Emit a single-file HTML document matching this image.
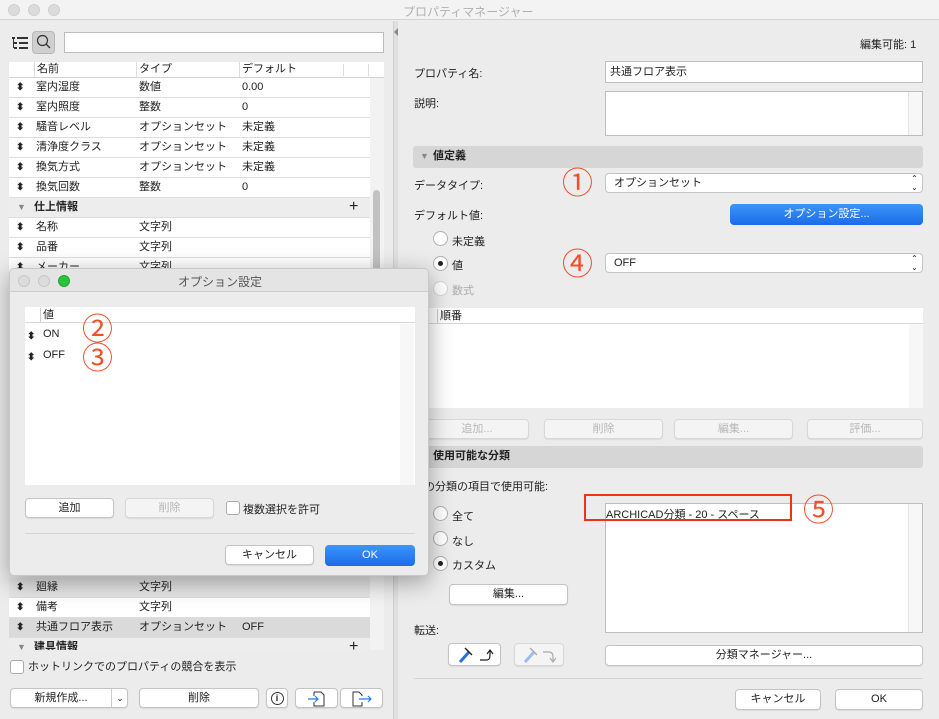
<!DOCTYPE html>
<html><head><meta charset="utf-8"><style>
*{box-sizing:border-box;margin:0;padding:0}
body{width:939px;height:719px;overflow:hidden;background:#ececec;font-family:"Liberation Sans","Noto Sans CJK JP",sans-serif;font-size:11px;color:#222;position:relative}
.a{position:absolute}
.btn{position:absolute;background:#fff;border:1px solid #c4c4c4;border-radius:4px;text-align:center;line-height:18px;font-size:11px;box-shadow:0 1px 1px rgba(0,0,0,.08)}
.dis{color:#b8b8b8;background:#f4f4f4;border-color:#d8d8d8}
.field{position:absolute;background:#fff;border:1px solid #bdbdbd}
.row{position:absolute;left:9px;width:361px;height:20px;background:#fff;border-bottom:1px solid #ddd;line-height:19px}
.row span{position:absolute}
.sort{position:absolute;left:7px;font-size:10px;line-height:10px;top:5px}
.radio{position:absolute;width:15px;height:15px;border-radius:50%;background:#fff;border:1px solid #b0b0b0}
.radio.on::after{content:"";position:absolute;left:4px;top:4px;width:5px;height:5px;border-radius:50%;background:#222}
.num{position:absolute;color:#f0502a;font-size:31px;line-height:31px;font-family:"Noto Sans CJK JP",sans-serif}
.sec{position:absolute;background:#d6d6d6;border-radius:3px;font-weight:bold;line-height:21px;padding-left:20px}
.sel{position:absolute;background:#fff;border:1px solid #c4c4c4;border-radius:4px;padding-left:8px;line-height:18px}
.sel::after{content:"⌃⌄";position:absolute;right:4px;top:0;font-size:8px;writing-mode:vertical-lr;line-height:8px}
</style></head><body>
<div class="a" style="left:0;top:0;width:939px;height:20px;background:#f3f3f3;border-bottom:1px solid #d4d4d4"></div>
<div class="a" style="left:8px;top:4px;width:12px;height:12px;border-radius:50%;background:#dcdcdc;border:1px solid #cfcfcf"></div>
<div class="a" style="left:28px;top:4px;width:12px;height:12px;border-radius:50%;background:#dcdcdc;border:1px solid #cfcfcf"></div>
<div class="a" style="left:48px;top:4px;width:12px;height:12px;border-radius:50%;background:#dcdcdc;border:1px solid #cfcfcf"></div>
<div class="a" style="left:403px;top:3px;font-size:12px;color:#b0b0b0">プロパティマネージャー</div>

<div class="a" style="left:393px;top:21px;width:5px;height:698px;background:#e0e0e0;border-left:1px solid #d0d0d0"></div>
<div class="a" style="left:394px;top:28px;width:0;height:0;border-top:4px solid transparent;border-bottom:4px solid transparent;border-right:4px solid #888"></div>

<svg class="a" style="left:12px;top:37px" width="17" height="12"><g fill="#333"><rect x="0" y="0" width="3" height="2"/><rect x="5" y="0" width="11" height="2"/><rect x="2" y="5" width="3" height="2"/><rect x="7" y="5" width="9" height="2"/><rect x="2" y="10" width="3" height="2"/><rect x="7" y="10" width="9" height="2"/><rect x="1" y="2" width="1" height="9"/></g></svg>
<div class="a" style="left:32px;top:31px;width:23px;height:23px;background:#cfcfcf;border:1px solid #b8b8b8;border-radius:4px"></div>
<svg class="a" style="left:36px;top:34px" width="16" height="16"><circle cx="6.5" cy="6.5" r="5" fill="none" stroke="#333" stroke-width="1.2"/><line x1="10" y1="10" x2="14" y2="14" stroke="#333" stroke-width="1.3"/></svg>
<div class="field" style="left:64px;top:32px;width:320px;height:21px"></div>

<div class="a" style="left:9px;top:62px;width:375px;height:16px;background:#fff;border-bottom:1px solid #d4d4d4"></div>
<div class="a" style="left:34px;top:62px;line-height:15px;border-left:1px solid #ddd;padding-left:2px">名前</div>
<div class="a" style="left:136px;top:62px;line-height:15px;border-left:1px solid #ddd;padding-left:2px">タイプ</div>
<div class="a" style="left:239px;top:62px;line-height:15px;border-left:1px solid #ddd;padding-left:2px">デフォルト</div>
<div class="a" style="left:343px;top:64px;height:12px;border-left:1px solid #ddd"></div>
<div class="a" style="left:368px;top:64px;height:12px;border-left:1px solid #ddd"></div>
<div class="a" style="left:370px;top:78px;width:14px;height:572px;background:#f2f2f2"></div>
<div class="a" style="left:373px;top:190px;width:7px;height:90px;background:#c2c2c2;border-radius:4px"></div>

<div class="row" style="top:78px"><b class="sort">⬍</b><span style="left:27px">室内湿度</span><span style="left:130px">数値</span><span style="left:233px">0.00</span></div>
<div class="row" style="top:98px"><b class="sort">⬍</b><span style="left:27px">室内照度</span><span style="left:130px">整数</span><span style="left:233px">0</span></div>
<div class="row" style="top:118px"><b class="sort">⬍</b><span style="left:27px">騒音レベル</span><span style="left:130px">オプションセット</span><span style="left:233px">未定義</span></div>
<div class="row" style="top:138px"><b class="sort">⬍</b><span style="left:27px">清浄度クラス</span><span style="left:130px">オプションセット</span><span style="left:233px">未定義</span></div>
<div class="row" style="top:158px"><b class="sort">⬍</b><span style="left:27px">換気方式</span><span style="left:130px">オプションセット</span><span style="left:233px">未定義</span></div>
<div class="row" style="top:178px"><b class="sort">⬍</b><span style="left:27px">換気回数</span><span style="left:130px">整数</span><span style="left:233px">0</span></div>
<div class="row" style="top:198px;background:#ededed"><span style="left:8px;color:#888;font-size:9px">▼</span><span style="left:25px;font-weight:bold">仕上情報</span><span style="left:340px;font-size:16px;line-height:18px">+</span></div>
<div class="row" style="top:218px"><b class="sort">⬍</b><span style="left:27px">名称</span><span style="left:130px">文字列</span></div>
<div class="row" style="top:238px"><b class="sort">⬍</b><span style="left:27px">品番</span><span style="left:130px">文字列</span></div>
<div class="row" style="top:258px"><b class="sort">⬍</b><span style="left:27px">メーカー</span><span style="left:130px">文字列</span></div>
<div class="row" style="top:578px;background:#e6e6e6"><b class="sort">⬍</b><span style="left:27px">廻縁</span><span style="left:130px">文字列</span></div>
<div class="row" style="top:598px"><b class="sort">⬍</b><span style="left:27px">備考</span><span style="left:130px">文字列</span></div>
<div class="row" style="top:618px;background:#dadada"><b class="sort">⬍</b><span style="left:27px">共通フロア表示</span><span style="left:130px">オプションセット</span><span style="left:233px">OFF</span></div>
<div class="row" style="top:638px;height:12px;overflow:hidden;background:#ededed;border:0"><span style="left:8px;color:#888;font-size:9px">▼</span><span style="left:25px;font-weight:bold">建具情報</span><span style="left:340px;font-size:16px;line-height:18px">+</span></div>

<div class="a" style="left:10px;top:660px;width:14px;height:14px;background:#fff;border:1px solid #aaa;border-radius:3px"></div>
<div class="a" style="left:28px;top:660px;line-height:14px">ホットリンクでのプロパティの競合を表示</div>
<div class="btn" style="left:10px;top:688px;width:118px;height:20px"><span style="position:absolute;left:0;width:100px">新規作成...</span><span style="position:absolute;left:100px;top:0;width:17px;border-left:1px solid #ccc;font-size:9px">⌄</span></div>
<div class="btn" style="left:139px;top:688px;width:120px;height:20px">削除</div>
<div class="btn" style="left:266px;top:688px;width:22px;height:20px"><span style="display:inline-block;width:13px;height:13px;border:1px solid #333;border-radius:50%;line-height:11px;font-size:9px;font-weight:bold;margin-top:3px">i</span></div>
<div class="btn" style="left:295px;top:688px;width:43px;height:20px"><svg width="20" height="18" style="margin-top:1px"><path d="M7 2 H14 L17 5 V16 H7 V12 M7 6 V2" fill="none" stroke="#333"/><path d="M1 9 H11 M8 6 L11 9 L8 12" fill="none" stroke="#2a7ae4" stroke-width="1.2"/></svg></div>
<div class="btn" style="left:340px;top:688px;width:43px;height:20px"><svg width="22" height="18" style="margin-top:1px"><path d="M11 6 V5 L8 2 H2 V16 H11 V12" fill="none" stroke="#333"/><path d="M8 9 H20 M17 6 L20 9 L17 12" fill="none" stroke="#2a7ae4" stroke-width="1.2"/></svg></div>

<div class="a" style="left:860px;top:36px;">編集可能: 1</div>
<div class="a" style="left:414px;top:65px">プロパティ名:</div>
<div class="field" style="left:605px;top:61px;width:318px;height:22px;padding-left:4px;line-height:20px">共通フロア表示</div>
<div class="a" style="left:414px;top:95px">説明:</div>
<div class="field" style="left:605px;top:91px;width:318px;height:45px"><div style="position:absolute;right:0;top:0;width:14px;height:43px;background:#f7f7f7;border-left:1px solid #e4e4e4"></div></div>
<div class="sec" style="left:413px;top:146px;width:510px;height:22px"><span style="position:absolute;left:7px;color:#888;font-size:9px;font-weight:normal">▼</span>値定義</div>
<div class="a" style="left:414px;top:177px">データタイプ:</div>
<div class="num" style="left:562px;top:165px">①</div>
<div class="sel" style="left:605px;top:173px;width:318px;height:20px">オプションセット</div>
<div class="a" style="left:414px;top:207px">デフォルト値:</div>
<div class="a" style="left:730px;top:204px;width:193px;height:21px;border-radius:4px;background:linear-gradient(#3d95f8,#1a6ce8);color:#fff;text-align:center;line-height:21px">オプション設定...</div>
<div class="radio" style="left:433px;top:231px"></div><div class="a" style="left:452px;top:233px">未定義</div>
<div class="radio on" style="left:433px;top:256px"></div><div class="a" style="left:452px;top:257px">値</div>
<div class="radio" style="left:433px;top:281px;border-color:#d4d4d4"></div><div class="a" style="left:452px;top:282px;color:#aaa">数式</div>
<div class="num" style="left:562px;top:246px">④</div>
<div class="sel" style="left:605px;top:253px;width:318px;height:20px">OFF</div>

<div class="a" style="left:420px;top:308px;width:503px;height:100px;background:#fff"></div>
<div class="a" style="left:420px;top:308px;width:503px;height:16px;border-bottom:1px solid #d8d8d8"></div>
<div class="a" style="left:437px;top:309px;border-left:1px solid #ccc;padding-left:2px;line-height:14px">順番</div>
<div class="a" style="left:909px;top:324px;width:14px;height:84px;background:#f7f7f7"></div>
<div class="btn dis" style="left:425px;top:419px;width:104px;height:20px">追加...</div>
<div class="btn dis" style="left:544px;top:419px;width:119px;height:20px">削除</div>
<div class="btn dis" style="left:674px;top:419px;width:119px;height:20px">編集...</div>
<div class="btn dis" style="left:807px;top:419px;width:116px;height:20px">評価...</div>
<div class="sec" style="left:420px;top:446px;width:503px;height:22px;padding-left:13px">使用可能な分類</div>
<div class="a" style="left:424px;top:478px">の分類の項目で使用可能:</div>
<div class="radio" style="left:433px;top:506px"></div><div class="a" style="left:452px;top:508px">全て</div>
<div class="radio" style="left:433px;top:531px"></div><div class="a" style="left:452px;top:533px">なし</div>
<div class="radio on" style="left:433px;top:556px"></div><div class="a" style="left:452px;top:557px">カスタム</div>
<div class="btn" style="left:449px;top:584px;width:119px;height:21px">編集...</div>
<div class="a" style="left:414px;top:622px">転送:</div>
<div class="btn" style="left:448px;top:643px;width:53px;height:23px"><svg width="50" height="20" style="margin-top:1px"><line x1="10" y1="17" x2="19" y2="7" stroke="#2a6fe0" stroke-width="3"/><line x1="15" y1="3" x2="22" y2="10" stroke="#222" stroke-width="1.4"/><path d="M30 15 H37 Q40 15 40 10 V6 M37 9 L40 5 L43 9" stroke="#222" fill="none" stroke-width="1.2"/></svg></div>
<div class="btn dis" style="left:514px;top:643px;width:50px;height:23px"><svg width="48" height="20" style="margin-top:1px"><line x1="10" y1="17" x2="19" y2="7" stroke="#9dbcf0" stroke-width="3"/><line x1="15" y1="3" x2="22" y2="10" stroke="#aaa" stroke-width="1.4"/><path d="M28 7 H34 Q38 7 38 12 V16 M35 13 L38 17 L41 13" stroke="#aaa" fill="none" stroke-width="1.2"/></svg></div>
<div class="field" style="left:605px;top:503px;width:318px;height:130px"><div style="position:absolute;right:0;top:0;width:14px;height:128px;background:#f7f7f7;border-left:1px solid #e4e4e4"></div><div style="position:absolute;left:0;top:2px">ARCHICAD分類 - 20 - スペース</div></div>
<div class="a" style="left:584px;top:494px;width:208px;height:27px;border:2px solid #f0321c"></div>
<div class="num" style="left:803px;top:492px">⑤</div>
<div class="btn" style="left:605px;top:645px;width:318px;height:21px">分類マネージャー...</div>
<div class="a" style="left:414px;top:678px;width:509px;border-top:1px solid #d4d4d4"></div>
<div class="btn" style="left:735px;top:689px;width:86px;height:21px">キャンセル</div>
<div class="btn" style="left:835px;top:689px;width:88px;height:21px">OK</div>

<div class="a" style="left:9px;top:268px;width:420px;height:308px;background:#ececec;border:1px solid #c8c8c8;border-radius:5px;box-shadow:0 6px 24px rgba(0,0,0,.35);overflow:hidden">
 <div class="a" style="left:0;top:0;width:420px;height:23px;background:#e4e4e4;border-bottom:1px solid #cdcdcd"></div>
 <div class="a" style="left:8px;top:6px;width:12px;height:12px;border-radius:50%;background:#dcdcdc;border:1px solid #c8c8c8"></div>
 <div class="a" style="left:28px;top:6px;width:12px;height:12px;border-radius:50%;background:#dcdcdc;border:1px solid #c8c8c8"></div>
 <div class="a" style="left:48px;top:6px;width:12px;height:12px;border-radius:50%;background:#2ac33f;border:1px solid #1fa632"></div>
 <div class="a" style="left:0;width:420px;top:4px;text-align:center;font-size:12px;color:#555">オプション設定</div>
 <div class="a" style="left:15px;top:38px;width:390px;height:178px;background:#fff"></div>
 <div class="a" style="left:15px;top:38px;width:390px;height:16px;border-bottom:1px solid #d8d8d8"></div>
 <div class="a" style="left:30px;top:39px;border-left:1px solid #ccc;padding-left:2px;line-height:14px">値</div>
 <div class="a" style="left:390px;top:55px;width:14px;height:161px;background:#f7f7f7"></div>
 <b class="a" style="left:17px;top:62px;font-size:10px">⬍</b><div class="a" style="left:33px;top:59px">ON</div>
 <b class="a" style="left:17px;top:83px;font-size:10px">⬍</b><div class="a" style="left:33px;top:80px">OFF</div>
 <div class="num" style="left:72px;top:42px">②</div>
 <div class="num" style="left:72px;top:71px">③</div>
 <div class="btn" style="left:15px;top:229px;width:89px;height:20px">追加</div>
 <div class="btn dis" style="left:115px;top:229px;width:89px;height:20px">削除</div>
 <div class="a" style="left:216px;top:232px;width:14px;height:14px;background:#fff;border:1px solid #aaa;border-radius:3px"></div>
 <div class="a" style="left:233px;top:232px">複数選択を許可</div>
 <div class="a" style="left:15px;top:264px;width:390px;border-top:1px solid #d4d4d4"></div>
 <div class="btn" style="left:215px;top:276px;width:89px;height:20px">キャンセル</div>
 <div class="a" style="left:315px;top:276px;width:90px;height:21px;border-radius:4px;background:linear-gradient(#3d95f8,#1a6ce8);color:#fff;text-align:center;line-height:21px">OK</div>
</div>
</body></html>
